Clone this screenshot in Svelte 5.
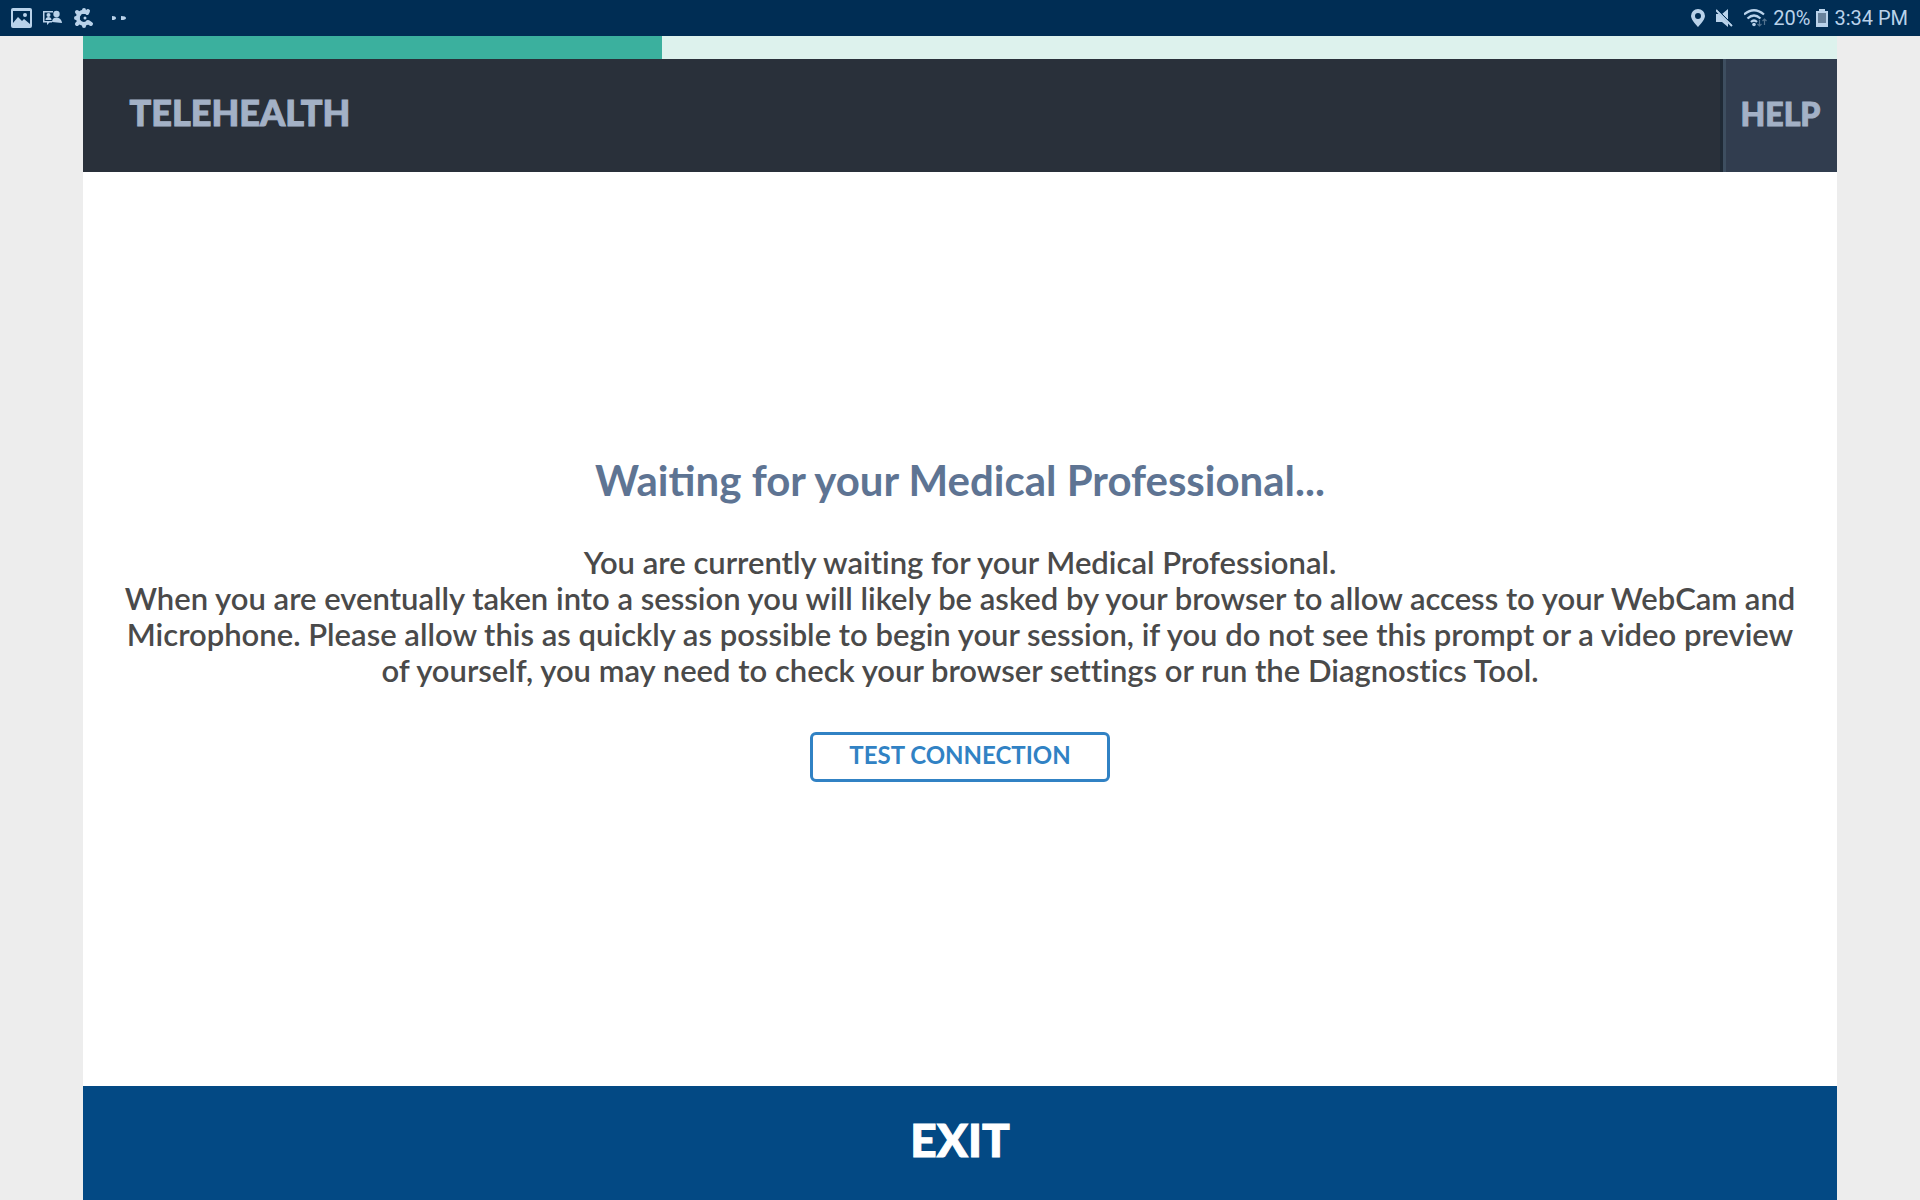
<script>
    let progress = 33;
    let battery = 20;
    let time = '3:34 PM';
</script>

<style>
    :global(body) {
        background: #ededed;
        font-family: Lato, "Liberation Sans", sans-serif;
    }

    .screen {
        min-height: 100vh;
        display: flex;
        flex-direction: column;
    }

    .status {
        display: flex;
        align-items: center;
        justify-content: space-between;
        height: 36px;
        padding: 0 12px 0 11px;
        box-sizing: border-box;
        background: #002d54;
        color: #b9d2ea;
        font-family: Roboto, "Liberation Sans", sans-serif;
        font-size: 20px;
    }

    .group {
        display: flex;
        align-items: center;
        gap: 11px;
    }

    .info {
        gap: 6px;
    }

    svg {
        display: block;
        fill: #b9d2ea;
    }

    .page {
        flex: 1;
        display: flex;
        flex-direction: column;
        width: 91.4%;
        margin: 0 auto;
        background: white;
    }

    .progress {
        height: 23px;
        background: #ddf2ed;
    }

    .filler {
        height: 100%;
        background: #3bb09e;
    }

    header {
        display: flex;
        justify-content: space-between;
        height: 113px;
        background: #29303a;
        color: #a3b1c6;
    }

    h1 {
        margin: 0;
        padding: 0 47px;
        font-size: 36px;
        line-height: 106px;
        font-weight: 900;
        -webkit-text-stroke: 1px;
    }

    button {
        font-family: inherit;
        cursor: pointer;
    }

    .help {
        padding: 0 17px 4px 15px;
        border: none;
        border-left: 3px solid #3d4e60;
        box-shadow: -3px 0 #1f2a36;
        background: #313d4f;
        color: inherit;
        font-size: 32px;
        font-weight: 900;
        -webkit-text-stroke: 1px;
    }

    main {
        flex: 1;
        display: flex;
        flex-direction: column;
        align-items: center;
        justify-content: center;
        padding: 0 32px 23px;
        text-align: center;
    }

    h2 {
        margin: 0 0 38px;
        color: #5e7493;
        font-size: 42px;
        line-height: 52px;
        font-weight: 700;
    }

    p {
        margin: 0;
        color: #4a4a4a;
        font-size: 31px;
        line-height: 36px;
        font-weight: 600;
        font-variant-ligatures: none;
    }

    .test {
        margin-top: 44px;
        padding: 0 36px 4px;
        height: 50px;
        border: 3px solid #3182c4;
        border-radius: 6px;
        background: white;
        color: #3182c4;
        font-size: 24px;
        font-weight: 700;
    }

    .exit {
        height: 114px;
        padding: 0 0 8px;
        border: none;
        background: #034984;
        color: white;
        font-size: 46px;
        font-weight: 900;
        -webkit-text-stroke: 1px;
    }
</style>

<svelte:head>
    <title>Telehealth</title>
</svelte:head>

<div class="screen">
    <div class="status">
        <div class="group">
            <svg width="21" height="20" viewBox="0 0 21 20">
                <path fill-rule="evenodd" d="M2 0h17a2 2 0 0 1 2 2v16a2 2 0 0 1-2 2H2a2 2 0 0 1-2-2V2a2 2 0 0 1 2-2zM2 3v12l5-6 4 4 2-2 6 5V3zM14 5a2 2 0 1 1 0 4 2 2 0 0 1 0-4z"/>
            </svg>
            <svg width="20" height="16" viewBox="0 0 20 16">
                <path d="M0 1h10v1.500H1.500V11H9v1.500H6.500L4 15v-2.500H0z"/>
                <circle cx="5.500" cy="5" r="2"/>
                <path d="M2.500 10c0-4 6-4 6 0z"/>
                <circle cx="13.500" cy="4" r="3.200"/>
                <path d="M9 12c0-6 9-6 10 1z"/>
            </svg>
            <svg width="20" height="22" viewBox="0 0 20 22">
                <path d="M12 5.200A6 6 0 1 0 14.500 14.500" fill="none" stroke="#b9d2ea" stroke-width="4"/>
                <g stroke="#b9d2ea" stroke-width="4" stroke-linecap="round">
                    <path d="M10 5V3M13 6l1-2M5 7 3 5M4 11H2M5 15l-2 2M10 17v2M14 15l3 2"/>
                </g>
                <circle cx="11" cy="11" r="1.500"/>
            </svg>
            <svg width="28" height="6" viewBox="0 0 28 6">
                <path d="M7 1q4 0 4 2t-4 2zM16 1q5 0 5 2t-5 2z"/>
            </svg>
        </div>
        <div class="group info">
            <div class="group">
                <svg width="14" height="18" viewBox="0 0 14 18">
                    <path fill-rule="evenodd" d="M7 0a7 7 0 0 1 7 7c0 4-7 11-7 11S0 11 0 7a7 7 0 0 1 7-7zm0 4a3 3 0 1 0 0 6 3 3 0 0 0 0-6z"/>
                </svg>
                <svg width="17" height="18" viewBox="0 0 17 18">
                    <path d="M0 5h3l9 9v4l-6-5H0zM6 5l6-5v11z"/>
                    <path d="M0 1l16 16" fill="none" stroke="#b9d2ea" stroke-width="2"/>
                    <path d="M2 1l15 15" fill="none" stroke="#002d54" stroke-width="1"/>
                </svg>
                <svg width="23" height="18" viewBox="0 0 23 18">
                    <path d="M0 5.500q10-8.500 20 0M3.500 9.500q6.500-6 13 0M7 13q3-3 6 0" fill="none" stroke="#b9d2ea" stroke-width="2.200"/>
                    <circle cx="10" cy="15.500" r="1.800"/>
                    <path d="M15.500 11v6m-2-2 2 2 2-2M20.500 16v-6m-2 2 2-2 2 2" fill="none" stroke="#52728f" stroke-width="1.200"/>
                </svg>
            </div>
            <span>{battery}%</span>
            <svg width="12" height="18" viewBox="0 0 12 18">
                <path d="M3 0h6v2h3v16H0V2h3z"/>
                <path d="M2 4h8v10H2z" fill="#68829c"/>
            </svg>
            <span>{time}</span>
        </div>
    </div>

    <div class="page">
        <div class="progress">
            <div class="filler" style="width: {progress}%"></div>
        </div>

        <header>
            <h1>TELEHEALTH</h1>
            <button class="help">HELP</button>
        </header>

        <main>
            <h2>Waiting for your Medical Professional...</h2>
            <p>
                You are currently waiting for your Medical Professional.<br>
                When you are eventually taken into a session you will likely be asked by your browser to allow access to your WebCam and Microphone. Please allow this as quickly as possible to begin your session, if you do not see this prompt or a video preview of yourself, you may need to check your browser settings or run the Diagnostics Tool.
            </p>
            <button class="test">TEST CONNECTION</button>
        </main>

        <button class="exit">EXIT</button>
    </div>
</div>
